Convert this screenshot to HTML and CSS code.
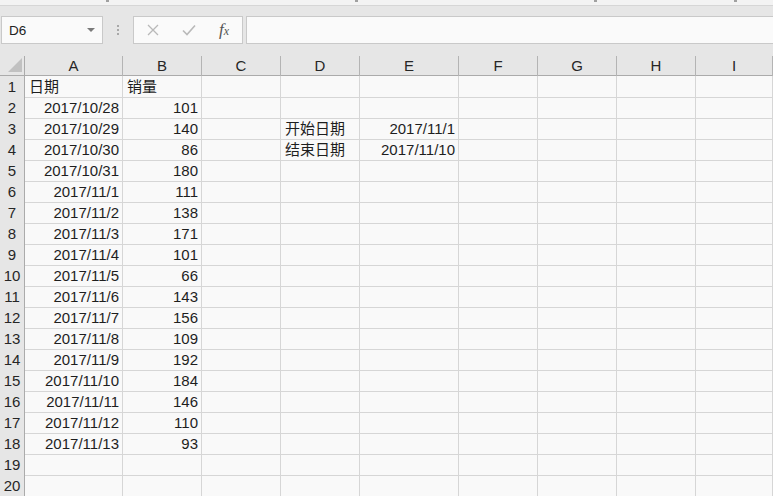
FILE: index.html
```html
<!DOCTYPE html>
<html lang="zh-CN">
<head>
<meta charset="utf-8">
<title>Sheet</title>
<link rel="stylesheet" href="styles.css">
</head>
<body>
<div class="ribbon-edge">
  <span class="mark m1"></span><span class="mark m2"></span><span class="mark m3"></span><span class="mark m4"></span>
</div>
<div class="toolbar">
  <div class="namebox"><span class="name">D6</span><span class="caret"></span></div>
  <div class="grip"><i></i><i></i><i></i></div>
  <div class="fxbox">
    <svg class="ico" width="14" height="14" viewBox="0 0 14 14"><path d="M2 2 L12 12 M12 2 L2 12" stroke="#b9b9b9" stroke-width="1.3" fill="none"/></svg>
    <svg class="ico" width="16" height="14" viewBox="0 0 16 14"><path d="M2 7.5 L6 11.5 L14 2.5" stroke="#b9b9b9" stroke-width="1.6" fill="none"/></svg>
    <span class="fx">f<sub>x</sub></span>
  </div>
  <div class="formula"></div>
</div>
<div class="sheet">
  <div class="hrow">
    <div class="corner"><span class="tri"></span></div>
    <div class="ch">A</div><div class="ch">B</div><div class="ch">C</div><div class="ch">D</div><div class="ch">E</div><div class="ch">F</div><div class="ch">G</div><div class="ch">H</div><div class="ch">I</div>
  </div>
  <div class="row"><div class="rh">1</div><div class="c">日期</div><div class="c">销量</div><div class="c"></div><div class="c"></div><div class="c"></div><div class="c"></div><div class="c"></div><div class="c"></div><div class="c"></div></div>
  <div class="row"><div class="rh">2</div><div class="c n">2017/10/28</div><div class="c n">101</div><div class="c"></div><div class="c"></div><div class="c"></div><div class="c"></div><div class="c"></div><div class="c"></div><div class="c"></div></div>
  <div class="row"><div class="rh">3</div><div class="c n">2017/10/29</div><div class="c n">140</div><div class="c"></div><div class="c">开始日期</div><div class="c n">2017/11/1</div><div class="c"></div><div class="c"></div><div class="c"></div><div class="c"></div></div>
  <div class="row"><div class="rh">4</div><div class="c n">2017/10/30</div><div class="c n">86</div><div class="c"></div><div class="c">结束日期</div><div class="c n">2017/11/10</div><div class="c"></div><div class="c"></div><div class="c"></div><div class="c"></div></div>
  <div class="row"><div class="rh">5</div><div class="c n">2017/10/31</div><div class="c n">180</div><div class="c"></div><div class="c"></div><div class="c"></div><div class="c"></div><div class="c"></div><div class="c"></div><div class="c"></div></div>
  <div class="row"><div class="rh">6</div><div class="c n">2017/11/1</div><div class="c n">111</div><div class="c"></div><div class="c"></div><div class="c"></div><div class="c"></div><div class="c"></div><div class="c"></div><div class="c"></div></div>
  <div class="row"><div class="rh">7</div><div class="c n">2017/11/2</div><div class="c n">138</div><div class="c"></div><div class="c"></div><div class="c"></div><div class="c"></div><div class="c"></div><div class="c"></div><div class="c"></div></div>
  <div class="row"><div class="rh">8</div><div class="c n">2017/11/3</div><div class="c n">171</div><div class="c"></div><div class="c"></div><div class="c"></div><div class="c"></div><div class="c"></div><div class="c"></div><div class="c"></div></div>
  <div class="row"><div class="rh">9</div><div class="c n">2017/11/4</div><div class="c n">101</div><div class="c"></div><div class="c"></div><div class="c"></div><div class="c"></div><div class="c"></div><div class="c"></div><div class="c"></div></div>
  <div class="row"><div class="rh">10</div><div class="c n">2017/11/5</div><div class="c n">66</div><div class="c"></div><div class="c"></div><div class="c"></div><div class="c"></div><div class="c"></div><div class="c"></div><div class="c"></div></div>
  <div class="row"><div class="rh">11</div><div class="c n">2017/11/6</div><div class="c n">143</div><div class="c"></div><div class="c"></div><div class="c"></div><div class="c"></div><div class="c"></div><div class="c"></div><div class="c"></div></div>
  <div class="row"><div class="rh">12</div><div class="c n">2017/11/7</div><div class="c n">156</div><div class="c"></div><div class="c"></div><div class="c"></div><div class="c"></div><div class="c"></div><div class="c"></div><div class="c"></div></div>
  <div class="row"><div class="rh">13</div><div class="c n">2017/11/8</div><div class="c n">109</div><div class="c"></div><div class="c"></div><div class="c"></div><div class="c"></div><div class="c"></div><div class="c"></div><div class="c"></div></div>
  <div class="row"><div class="rh">14</div><div class="c n">2017/11/9</div><div class="c n">192</div><div class="c"></div><div class="c"></div><div class="c"></div><div class="c"></div><div class="c"></div><div class="c"></div><div class="c"></div></div>
  <div class="row"><div class="rh">15</div><div class="c n">2017/11/10</div><div class="c n">184</div><div class="c"></div><div class="c"></div><div class="c"></div><div class="c"></div><div class="c"></div><div class="c"></div><div class="c"></div></div>
  <div class="row"><div class="rh">16</div><div class="c n">2017/11/11</div><div class="c n">146</div><div class="c"></div><div class="c"></div><div class="c"></div><div class="c"></div><div class="c"></div><div class="c"></div><div class="c"></div></div>
  <div class="row"><div class="rh">17</div><div class="c n">2017/11/12</div><div class="c n">110</div><div class="c"></div><div class="c"></div><div class="c"></div><div class="c"></div><div class="c"></div><div class="c"></div><div class="c"></div></div>
  <div class="row"><div class="rh">18</div><div class="c n">2017/11/13</div><div class="c n">93</div><div class="c"></div><div class="c"></div><div class="c"></div><div class="c"></div><div class="c"></div><div class="c"></div><div class="c"></div></div>
  <div class="row"><div class="rh">19</div><div class="c"></div><div class="c"></div><div class="c"></div><div class="c"></div><div class="c"></div><div class="c"></div><div class="c"></div><div class="c"></div><div class="c"></div></div>
  <div class="row"><div class="rh">20</div><div class="c"></div><div class="c"></div><div class="c"></div><div class="c"></div><div class="c"></div><div class="c"></div><div class="c"></div><div class="c"></div><div class="c"></div></div>
</div>
</body>
</html>
```
FILE: styles.css
```css
html, body {
  margin: 0;
  padding: 0;
}
body {
  width: 773px;
  height: 496px;
  overflow: hidden;
  background: #f9f9f9;
  font-family: "Liberation Sans", "Noto Sans CJK SC", sans-serif;
  color: #222;
}
.ribbon-edge {
  height: 5px;
  background: #f3f3f3;
  border-bottom: 1px solid #d6d6d6;
  display: flex;
  align-items: flex-start;
}
.mark {
  width: 3px;
  height: 2px;
  background: #a0a0a0;
}
.m1 { margin-left: 106px; }
.m2 { margin-left: 246px; }
.m3 { margin-left: 236px; }
.m4 { margin-left: 137px; }
.toolbar {
  height: 50px;
  background: #e6e6e6;
  display: flex;
  align-items: flex-start;
  padding-top: 10px;
  box-sizing: border-box;
}
.namebox {
  margin-left: 1px;
  width: 102px;
  height: 28px;
  box-sizing: border-box;
  background: #fafafa;
  border: 1px solid #c9c9c9;
  display: flex;
  align-items: center;
  justify-content: space-between;
  padding: 0 7px 0 7px;
}
.name {
  font-size: 13.5px;
  color: #222;
}
.caret {
  width: 0;
  height: 0;
  border-left: 4px solid transparent;
  border-right: 4px solid transparent;
  border-top: 4px solid #7a7a7a;
}
.grip {
  width: 30px;
  height: 28px;
  display: flex;
  flex-direction: column;
  align-items: center;
  justify-content: center;
  gap: 2px;
}
.grip i {
  width: 2px;
  height: 2px;
  background: #a8a8a8;
}
.fxbox {
  width: 110px;
  height: 28px;
  box-sizing: border-box;
  background: #fafafa;
  border: 1px solid #c9c9c9;
  display: flex;
  align-items: center;
  padding-left: 12px;
  gap: 21px;
}
.fx {
  font-family: "Liberation Serif", serif;
  font-style: italic;
  font-size: 17px;
  color: #555;
  margin-left: 1px;
}
.fx sub {
  font-size: 12px;
  vertical-align: 0;
}
.formula {
  margin-left: 3px;
  flex: 1;
  height: 28px;
  box-sizing: border-box;
  background: #fafafa;
  border: 1px solid #c9c9c9;
  border-right: none;
}
.hrow, .row {
  display: grid;
  grid-template-columns: 25px 98px 79px 79px 79px 99px 79px 79px 79px 1fr;
}
.hrow {
  height: 19px;
  background: #e6e6e6;
  border-bottom: 1px solid #ababab;
}
.corner {
  border-right: 1px solid #ababab;
  position: relative;
}
.tri {
  position: absolute;
  left: 8px;
  top: 2px;
  width: 0;
  height: 0;
  border-left: 14px solid transparent;
  border-bottom: 14px solid #c1c1c1;
}
.ch {
  border-right: 1px solid #b4b4b4;
  text-align: center;
  font-size: 15px;
  line-height: 20px;
  color: #262626;
}
.row {
  height: 21px;
}
.rh {
  background: #e6e6e6;
  border-right: 1px solid #ababab;
  border-bottom: 1px solid #c8c8c8;
  text-align: center;
  font-size: 15px;
  line-height: 21px;
  color: #262626;
}
.c {
  border-right: 1px solid #d6d6d6;
  border-bottom: 1px solid #d6d6d6;
  font-size: 15px;
  line-height: 21px;
  padding: 0 3px 0 4px;
  white-space: nowrap;
  overflow: hidden;
  color: #1e1e1e;
}
.n {
  text-align: right;
}
```
